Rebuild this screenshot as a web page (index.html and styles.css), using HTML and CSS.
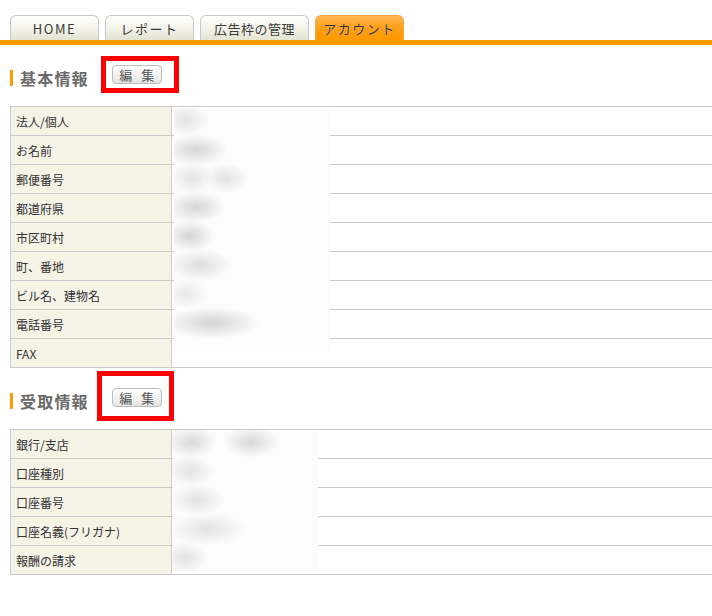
FILE: index.html
```html
<!DOCTYPE html>
<html lang="ja">
<head>
<meta charset="utf-8">
<title>アカウント</title>
<link rel="stylesheet" href="styles.css">
</head>
<body>
<nav class="tabs">
  <a class="tab">HOME</a>
  <a class="tab">レポート</a>
  <a class="tab tab-wide">広告枠の管理</a>
  <a class="tab tab-active">アカウント</a>
</nav>
<div class="tabline"></div>

<section class="sec sec-first">
  <div class="sec-head">
    <h2 class="sec-title">基本情報</h2>
    <button class="edit-btn" type="button">編 集</button>
    <span class="mark mark-1"></span>
  </div>
  <div class="tbl-wrap">
    <table class="info">
      <tr><th>法人/個人</th><td></td></tr>
      <tr><th>お名前</th><td></td></tr>
      <tr><th>郵便番号</th><td></td></tr>
      <tr><th>都道府県</th><td></td></tr>
      <tr><th>市区町村</th><td></td></tr>
      <tr><th>町、番地</th><td></td></tr>
      <tr><th>ビル名、建物名</th><td></td></tr>
      <tr><th>電話番号</th><td></td></tr>
      <tr><th>FAX</th><td></td></tr>
    </table>
    <div class="redact redact-1"></div>
  </div>
</section>

<section class="sec sec-second">
  <div class="sec-head">
    <h2 class="sec-title">受取情報</h2>
    <button class="edit-btn" type="button">編 集</button>
    <span class="mark mark-2"></span>
  </div>
  <div class="tbl-wrap">
    <table class="info">
      <tr><th>銀行/支店</th><td></td></tr>
      <tr><th>口座種別</th><td></td></tr>
      <tr><th>口座番号</th><td></td></tr>
      <tr><th>口座名義(フリガナ)</th><td></td></tr>
      <tr><th>報酬の請求</th><td></td></tr>
    </table>
    <div class="redact redact-2"></div>
  </div>
</section>
</body>
</html>
```

FILE: styles.css
```css
html { overflow: hidden; }
body {
  margin: 0;
  background: #fff;
  font-family: "Noto Sans CJK JP", "Noto Sans", sans-serif;
  font-size: 12px;
  color: #333;
}

.tabs {
  display: flex;
  gap: 6px;
  padding: 15px 0 0 10px;
  height: 25px;
}
.tab {
  box-sizing: border-box;
  width: 89px;
  height: 25px;
  border: 1px solid #c8c8c8;
  border-bottom: none;
  border-radius: 6px 6px 0 0;
  background: linear-gradient(#ffffff 0%, #f6f6ef 40%, #e3e3d2 100%);
  display: flex;
  align-items: center;
  justify-content: center;
  font-size: 13px;
  letter-spacing: 1.5px;
  color: #3a3a3a;
  font-weight: normal;
}
.tab-wide { width: 109px; letter-spacing: 0.5px; }
.tab-active {
  border-color: #f7a43a;
  background: linear-gradient(#ffbb55 0%, #ff9f1a 45%, #ff9900 100%);
  color: #333;
  text-shadow: 0 0 1px #ffd9a0;
}
.tabline {
  height: 5px;
  background: #ff9900;
}

.sec-first { padding-top: 20px; }
.sec-second { padding-top: 20px; }

.sec-head {
  position: relative;
  display: flex;
  align-items: flex-start;
  padding-left: 10px;
  height: 21px;
}
.sec-title {
  margin: 5px 0 0 0;
  border-left: 3px solid #ff9900;
  padding-left: 7px;
  height: 16px;
  line-height: 16px;
  font-size: 16px;
  font-weight: bold;
  letter-spacing: 1.2px;
  color: #6a6a6a;
}
.edit-btn {
  box-sizing: border-box;
  margin: 0 0 0 23px;
  width: 50px;
  height: 19px;
  padding: 0 0 0 3px;
  border: 1px solid #bdbdbd;
  border-radius: 4px;
  background: linear-gradient(#ffffff, #f2f2f2 50%, #e4e4e4);
  font-family: "Noto Sans CJK JP", sans-serif;
  font-size: 13px;
  line-height: 17px;
  letter-spacing: 3px;
  color: #555;
}

.mark {
  position: absolute;
  box-sizing: border-box;
  border: 5px solid #ff0000;
}
.mark-1 { left: 101px; top: -9px; width: 78px; height: 37px; }
.mark-2 { left: 97px; top: -17px; width: 77px; height: 50px; }

.tbl-wrap {
  position: relative;
  margin: 20px 0 0 10px;
}
.info {
  width: 702px;
  border-collapse: collapse;
}
.info th, .info td {
  height: 28px;
  padding: 0 5px;
  border-top: 1px solid #cbcbcb;
  border-bottom: 1px solid #cbcbcb;
  font-size: 12px;
  font-weight: normal;
  text-align: left;
  color: #333;
}
.info th {
  box-sizing: border-box;
  width: 161px;
  background: #f5f2e6;
  border-left: 1px solid #cbcbcb;
  border-right: 1px solid #cbcbcb;
}
.info td { background: #fff; }

.redact {
  position: absolute;
  background-color: #fcfcfc;
}
.redact-1 {
  left: 164px; top: 2px; width: 156px; height: 244px;
  background-image:
    radial-gradient(22px 16px at 12px 12px, rgba(0,0,0,.10), rgba(0,0,0,0)),
    radial-gradient(32px 16px at 22px 42px, rgba(0,0,0,.15), rgba(0,0,0,0)),
    radial-gradient(22px 15px at 18px 70px, rgba(0,0,0,.10), rgba(0,0,0,0)),
    radial-gradient(22px 15px at 52px 70px, rgba(0,0,0,.10), rgba(0,0,0,0)),
    radial-gradient(30px 16px at 22px 99px, rgba(0,0,0,.15), rgba(0,0,0,0)),
    radial-gradient(24px 16px at 16px 128px, rgba(0,0,0,.16), rgba(0,0,0,0)),
    radial-gradient(32px 16px at 26px 157px, rgba(0,0,0,.12), rgba(0,0,0,0)),
    radial-gradient(22px 15px at 12px 186px, rgba(0,0,0,.08), rgba(0,0,0,0)),
    radial-gradient(48px 16px at 38px 215px, rgba(0,0,0,.16), rgba(0,0,0,0));
}
.redact-2 {
  left: 163px; top: 1px; width: 145px; height: 141px;
  background-image:
    radial-gradient(26px 16px at 18px 12px, rgba(0,0,0,.14), rgba(0,0,0,0)),
    radial-gradient(28px 16px at 78px 12px, rgba(0,0,0,.14), rgba(0,0,0,0)),
    radial-gradient(24px 16px at 17px 41px, rgba(0,0,0,.10), rgba(0,0,0,0)),
    radial-gradient(28px 16px at 24px 70px, rgba(0,0,0,.10), rgba(0,0,0,0)),
    radial-gradient(40px 16px at 34px 99px, rgba(0,0,0,.10), rgba(0,0,0,0)),
    radial-gradient(22px 16px at 12px 128px, rgba(0,0,0,.11), rgba(0,0,0,0));
}
```
